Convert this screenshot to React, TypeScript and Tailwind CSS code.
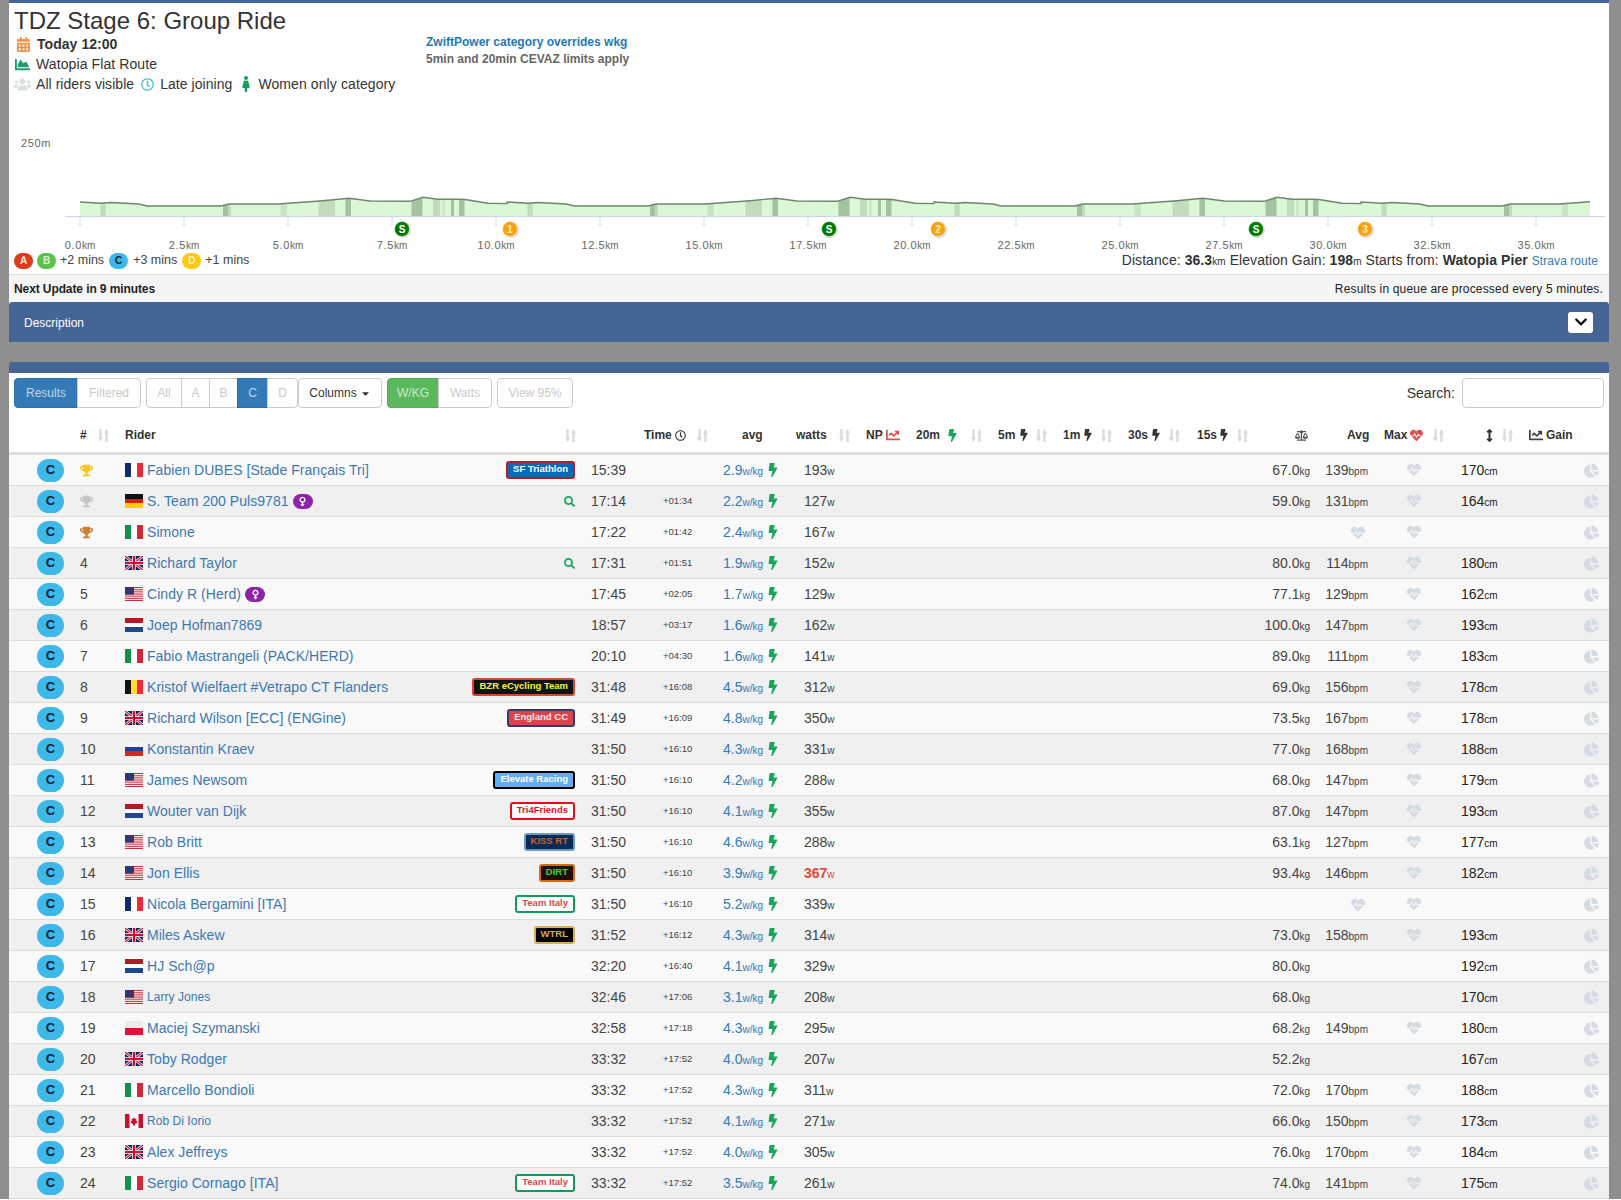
import {
  FaArrowsAltV,
  FaBalanceScale,
  FaBolt,
  FaCalendarAlt,
  FaCaretDown,
  FaChartArea,
  FaChartLine,
  FaChartPie,
  FaChevronDown,
  FaFemale,
  FaHeartbeat,
  FaRegClock,
  FaSearch,
  FaTrophy,
  FaUsers,
  FaVenus,
} from "react-icons/fa";

type Team = { name: string; cls: string };

const teams: Record<string, Team> = {
  sf: { name: "SF Triathlon", cls: "bg-[#0a6ab5] border-[#b0202e] text-white" },
  bzr: { name: "BZR eCycling Team", cls: "bg-[#111111] border-[#d9472b] text-[#f5f53a]" },
  eng: { name: "England CC", cls: "bg-[#d5464f] border-[#3a3a6a] text-[#f3e6e6]" },
  ele: { name: "Elevate Racing", cls: "bg-[#62aef0] border-[#000000] text-white" },
  tri: { name: "Tri4Friends", cls: "bg-white border-[#e0101c] text-[#e0101c]" },
  kiss: { name: "KISS RT", cls: "bg-[#0b2a55] border-[#6a9bbb] text-[#c8642a]" },
  dirt: { name: "DIRT", cls: "bg-[#1d0f05] border-[#cf6a1a] text-[#3fd23f]" },
  ita: { name: "Team Italy", cls: "bg-white border-[#109a5c] text-[#d9484f]" },
  wtrl: { name: "WTRL", cls: "bg-[#000000] border-[#d9b14c] text-[#d9b14c]" },
};

type Row = {
  flag: string;
  name: string;
  small?: boolean;
  team?: string;
  search?: boolean;
  venus?: boolean;
  time: string;
  delta?: string;
  wkg: string;
  watts: string;
  hot?: boolean;
  kg?: string;
  bpm?: string;
  height?: string;
  hearts?: "both" | "max" | "none";
};

const rows: Row[] = [
  { flag: "fr", name: "Fabien DUBES [Stade Français Tri]", team: "sf", time: "15:39", wkg: "2.9", watts: "193", kg: "67.0", bpm: "139", height: "170", hearts: "max" },
  { flag: "de", name: "S. Team 200 Puls9781", venus: true, search: true, time: "17:14", delta: "+01:34", wkg: "2.2", watts: "127", kg: "59.0", bpm: "131", height: "164", hearts: "max" },
  { flag: "it", name: "Simone", time: "17:22", delta: "+01:42", wkg: "2.4", watts: "167", hearts: "both" },
  { flag: "gb", name: "Richard Taylor", search: true, time: "17:31", delta: "+01:51", wkg: "1.9", watts: "152", kg: "80.0", bpm: "114", height: "180", hearts: "max" },
  { flag: "us", name: "Cindy R (Herd)", venus: true, time: "17:45", delta: "+02:05", wkg: "1.7", watts: "129", kg: "77.1", bpm: "129", height: "162", hearts: "max" },
  { flag: "nl", name: "Joep Hofman7869", time: "18:57", delta: "+03:17", wkg: "1.6", watts: "162", kg: "100.0", bpm: "147", height: "193", hearts: "max" },
  { flag: "it", name: "Fabio Mastrangeli (PACK/HERD)", time: "20:10", delta: "+04:30", wkg: "1.6", watts: "141", kg: "89.0", bpm: "111", height: "183", hearts: "max" },
  { flag: "be", name: "Kristof Wielfaert #Vetrapo CT Flanders", team: "bzr", time: "31:48", delta: "+16:08", wkg: "4.5", watts: "312", kg: "69.0", bpm: "156", height: "178", hearts: "max" },
  { flag: "gb", name: "Richard Wilson [ECC] (ENGine)", team: "eng", time: "31:49", delta: "+16:09", wkg: "4.8", watts: "350", kg: "73.5", bpm: "167", height: "178", hearts: "max" },
  { flag: "ru", name: "Konstantin Kraev", time: "31:50", delta: "+16:10", wkg: "4.3", watts: "331", kg: "77.0", bpm: "168", height: "188", hearts: "max" },
  { flag: "us", name: "James Newsom", team: "ele", time: "31:50", delta: "+16:10", wkg: "4.2", watts: "288", kg: "68.0", bpm: "147", height: "179", hearts: "max" },
  { flag: "nl", name: "Wouter van Dijk", team: "tri", time: "31:50", delta: "+16:10", wkg: "4.1", watts: "355", kg: "87.0", bpm: "147", height: "193", hearts: "max" },
  { flag: "us", name: "Rob Britt", team: "kiss", time: "31:50", delta: "+16:10", wkg: "4.6", watts: "288", kg: "63.1", bpm: "127", height: "177", hearts: "max" },
  { flag: "us", name: "Jon Ellis", team: "dirt", time: "31:50", delta: "+16:10", wkg: "3.9", watts: "367", hot: true, kg: "93.4", bpm: "146", height: "182", hearts: "max" },
  { flag: "fr", name: "Nicola Bergamini [ITA]", team: "ita", time: "31:50", delta: "+16:10", wkg: "5.2", watts: "339", hearts: "both" },
  { flag: "gb", name: "Miles Askew", team: "wtrl", time: "31:52", delta: "+16:12", wkg: "4.3", watts: "314", kg: "73.0", bpm: "158", height: "193", hearts: "max" },
  { flag: "nl", name: "HJ Sch@p", time: "32:20", delta: "+16:40", wkg: "4.1", watts: "329", kg: "80.0", height: "192", hearts: "none" },
  { flag: "us", name: "Larry Jones", small: true, time: "32:46", delta: "+17:06", wkg: "3.1", watts: "208", kg: "68.0", height: "170", hearts: "none" },
  { flag: "pl", name: "Maciej Szymanski", time: "32:58", delta: "+17:18", wkg: "4.3", watts: "295", kg: "68.2", bpm: "149", height: "180", hearts: "max" },
  { flag: "gb", name: "Toby Rodger", time: "33:32", delta: "+17:52", wkg: "4.0", watts: "207", kg: "52.2", height: "167", hearts: "none" },
  { flag: "it", name: "Marcello Bondioli", time: "33:32", delta: "+17:52", wkg: "4.3", watts: "311", kg: "72.0", bpm: "170", height: "188", hearts: "max" },
  { flag: "ca", name: "Rob Di Iorio", small: true, time: "33:32", delta: "+17:52", wkg: "4.1", watts: "271", kg: "66.0", bpm: "150", height: "173", hearts: "max" },
  { flag: "gb", name: "Alex Jeffreys", time: "33:32", delta: "+17:52", wkg: "4.0", watts: "305", kg: "76.0", bpm: "170", height: "184", hearts: "max" },
  { flag: "it", name: "Sergio Cornago [ITA]", team: "ita", time: "33:32", delta: "+17:52", wkg: "3.5", watts: "261", kg: "74.0", bpm: "141", height: "175", hearts: "max" },
];

const Flag = ({ code }: { code: string }) => {
  const body = () => {
    switch (code) {
      case "fr":
        return (
          <>
            <rect width="6" height="14" fill="#0f2a75" />
            <rect x="6" width="6" height="14" fill="#fff" />
            <rect x="12" width="6" height="14" fill="#ee2a39" />
          </>
        );
      case "it":
        return (
          <>
            <rect width="6" height="14" fill="#0f9150" />
            <rect x="6" width="6" height="14" fill="#fff" />
            <rect x="12" width="6" height="14" fill="#cf2b37" />
          </>
        );
      case "de":
        return (
          <>
            <rect width="18" height="5" fill="#111" />
            <rect y="5" width="18" height="4" fill="#dd1c1c" />
            <rect y="9" width="18" height="5" fill="#ffce00" />
          </>
        );
      case "be":
        return (
          <>
            <rect width="6" height="14" fill="#111" />
            <rect x="6" width="6" height="14" fill="#fde02f" />
            <rect x="12" width="6" height="14" fill="#ee2a39" />
          </>
        );
      case "nl":
        return (
          <>
            <rect width="18" height="5" fill="#ae1c28" />
            <rect y="5" width="18" height="4" fill="#fff" />
            <rect y="9" width="18" height="5" fill="#21468b" />
          </>
        );
      case "ru":
        return (
          <>
            <rect width="18" height="5" fill="#f4f4f4" />
            <rect y="5" width="18" height="4" fill="#1c3fa0" />
            <rect y="9" width="18" height="5" fill="#d52b1e" />
          </>
        );
      case "pl":
        return (
          <>
            <rect width="18" height="7" fill="#ececec" />
            <rect y="7" width="18" height="7" fill="#dc143c" />
          </>
        );
      case "ca":
        return (
          <>
            <rect width="18" height="14" fill="#fff" />
            <rect width="4.5" height="14" fill="#c8102e" />
            <rect x="13.5" width="4.5" height="14" fill="#c8102e" />
            <path d="M9 3l1 2 1.5-.6-.5 2.6 1.5-.4-.5 1.4.8.5L10 10l.2 1.4H7.8L8 10 5.2 8.5l.8-.5-.5-1.4 1.5.4-.5-2.6L8 5z" fill="#c8102e" />
          </>
        );
      case "us":
        return (
          <>
            <rect width="18" height="14" fill="#fff" />
            <rect width="18" height="1.1" fill="#c8313e" />
            <rect y="2.2" width="18" height="1.1" fill="#c8313e" />
            <rect y="4.3" width="18" height="1.1" fill="#c8313e" />
            <rect y="6.5" width="18" height="1.1" fill="#c8313e" />
            <rect y="8.6" width="18" height="1.1" fill="#c8313e" />
            <rect y="10.8" width="18" height="1.1" fill="#c8313e" />
            <rect y="12.9" width="18" height="1.1" fill="#c8313e" />
            <rect width="9" height="7.6" fill="#33366e" />
          </>
        );
      default:
        return (
          <>
            <rect width="18" height="14" fill="#14225f" />
            <path d="M0 0l18 14M18 0L0 14" stroke="#fff" strokeWidth="2.6" />
            <path d="M0 0l18 14M18 0L0 14" stroke="#c8102e" strokeWidth="1.2" />
            <path d="M9 0v14M0 7h18" stroke="#fff" strokeWidth="3.6" />
            <path d="M9 0v14M0 7h18" stroke="#c8102e" strokeWidth="2.2" />
          </>
        );
    }
  };
  return (
    <svg width="18" height="14" viewBox="0 0 18 14" className="shrink-0">
      {body()}
    </svg>
  );
};

// two fat arrows, down on the left and up on the right
const SortIcon = () => (
  <svg width="11" height="13" viewBox="0 0 11 13" className="block shrink-0" fill="#dadada">
    <path d="M1.3 0h2.4v8.5H5L2.5 13 0 8.5h1.3z" />
    <path d="M7.3 13h2.4V4.5H11L8.5 0 6 4.5h1.3z" />
  </svg>
);

// elevation profile: one lap, repeated until the route ends
const lapLine: [number, number][] = [
  [0, 202], [21, 203.3], [31, 202.5], [59, 204], [67, 206], [141, 206], [149, 204], [198, 204],
  [240, 201], [269, 198.3], [290, 201], [330, 201.3], [343, 197.3], [358, 199.3], [379, 199.3],
  [385, 199.5], [408, 203.3], [427, 203.6],
];
const lapBands: [number, number, string][] = [
  [20.5, 5.2, "#c0dcb8"], [143, 5, "#a3c29f"], [148, 3, "#c0dcb8"], [200.6, 6.4, "#c9e4c2"],
  [238.5, 16.5, "#c3dcbc"], [265.4, 5.6, "#a3c29f"], [331.5, 11, "#a3c29f"], [353, 7, "#c0dcb8"],
  [362, 3, "#cfe9c8"], [371, 3, "#a3c29f"], [379, 5.5, "#a3c29f"],
];
const laps = [80, 507, 934, 1361];
const profile = laps
  .flatMap((o) => lapLine.map(([x, y]) => [x + o, y] as [number, number]))
  .map(([x, y], i) => `${i === 0 ? "M" : "L"}${x} ${y}`)
  .join(" ");
const kms = Array.from({ length: 15 }, (_, i) => i);
const markers: [number, string, string][] = [
  [402, "S", "#007a00"],
  [510, "1", "#f5a313"],
  [829, "S", "#007a00"],
  [938, "2", "#f5a313"],
  [1256, "S", "#007a00"],
  [1365, "3", "#f5a313"],
];

const ElevationChart = () => (
  <svg viewBox="9 100 1600 152" className="block w-[1600px] h-[152px]" fontFamily="Liberation Sans, Arial, sans-serif">
    <defs>
      <clipPath id="route">
        <rect x="80" y="190" width="1510" height="26" />
      </clipPath>
    </defs>
    <text x="21" y="147" fontSize="11" fill="#666" letterSpacing="0.6">
      250m
    </text>
    <g clipPath="url(#route)">
      <path d={`${profile} V216 H80 Z`} fill="#dcf7d6" />
      {laps.map((o) =>
        lapBands.map(([x, w, c]) => <rect key={`${o}-${x}`} x={x + o} y="190" width={w} height="26" fill={c} />)
      )}
      <path d={`${profile} V190 H80 Z`} fill="#fff" />
      <path d={profile} fill="none" stroke="#6f8570" strokeWidth="1.4" />
    </g>
    <path d="M65 216.5H1605" stroke="#ccd6eb" />
    {kms.map((i) => (
      <g key={i}>
        <path d={`M${80 + i * 104} 216V226`} stroke="#ccd6eb" />
        <text x={80 + i * 104} y="249" textAnchor="middle" fontSize="11" fill="#666" letterSpacing="0.6">
          {(i * 2.5).toFixed(1)}
          <tspan fontSize="10" letterSpacing="0">
            km
          </tspan>
        </text>
      </g>
    ))}
    {markers.map(([x, t, c]) => (
      <g key={x}>
        <circle cx={x + 1} cy="230" r="8" fill="#000" opacity="0.15" />
        <circle cx={x} cy="229" r="7.5" fill={c} stroke="#fff" strokeWidth="0.5" />
        <text x={x} y="232.5" textAnchor="middle" fontSize="10" fontWeight="bold" fill={c === "#007a00" ? "#fff" : "#ffe9b8"}>
          {t}
        </text>
      </g>
    ))}
  </svg>
);

const CatDot = ({ label, cls }: { label: string; cls: string }) => (
  <span className={`inline-flex items-center justify-center w-[19px] h-[16px] rounded-full text-[10px] font-bold ${cls}`}>{label}</span>
);

const Bar = ({ children, on, faded, w }: { children: React.ReactNode; on?: string; faded?: boolean; w: string }) => (
  <span
    className={`flex items-center justify-center h-[30px] text-[12px] border ${w} ${
      on ? on : faded ? "bg-white border-[#ccc] text-[#c9c9c9]" : "bg-white border-[#ccc] text-[#333]"
    }`}
  >
    {children}
  </span>
);

const Head = ({ cls, children }: { cls?: string; children?: React.ReactNode }) => (
  <th className={`h-[47px] pt-[10px] border-b-[3px] border-[#ddd] font-bold text-[12px] text-[#333] align-middle ${cls ?? ""}`}>
    <div className="flex items-center whitespace-nowrap">{children}</div>
  </th>
);

export default function App() {
  return (
    <div className="bg-[#8f8f8f] pl-[9px] pr-[12px] font-['Liberation_Sans',Arial,sans-serif] text-[#333]">
      <section className="bg-white border-t-[3px] border-[#456596]">
        <div className="flex h-[97px]">
          <div className="w-[417px] pl-[5px]">
            <h1 className="text-[24px] leading-[27px] pt-[4px] text-[#333]">TDZ Stage 6: Group Ride</h1>
            <div className="flex items-center h-[20px] text-[14px]">
              <FaCalendarAlt className="ml-[2px] text-[#f0944d] text-[15px]" />
              <b className="ml-[6px] tracking-[0.05px]">Today 12:00</b>
            </div>
            <div className="flex items-center h-[20px] text-[14px]">
              <FaChartArea className="ml-[1px] text-[#1f9e6a] text-[15px]" />
              <span className="ml-[6px] tracking-[0.1px]">Watopia Flat Route</span>
            </div>
            <div className="flex items-center h-[20px] text-[14px]">
              <FaUsers className="text-[#dcdfe6] text-[17px]" />
              <span className="ml-[5px] tracking-[0.05px]">All riders visible</span>
              <FaRegClock className="ml-[7px] text-[#3fbfcf] text-[13px]" />
              <span className="ml-[6px] tracking-[0.05px]">Late joining</span>
              <FaFemale className="ml-[6px] text-[#13a05c] text-[16px]" />
              <span className="ml-[4px] tracking-[0.1px]">Women only category</span>
            </div>
          </div>
          <div className="pt-[31px] text-[12px] font-bold leading-[17px]">
            <div className="text-[#1f78b4]">ZwiftPower category overrides wkg</div>
            <div className="text-[#666]">5min and 20min CEVAZ limits apply</div>
          </div>
        </div>
        <ElevationChart />
        <div className="flex justify-between items-center h-[22px] pb-[5px] pl-[5px] pr-[11px] text-[12.5px] text-[#444]">
          <div className="flex items-center">
            <CatDot label="A" cls="bg-[#dd3c1c] text-[#fbe6e0]" />
            <CatDot label="B" cls="ml-[4px] bg-[#5cc24f] text-[#d8f3d0]" />
            <span className="ml-[4px]">+2 mins</span>
            <CatDot label="C" cls="ml-[5px] bg-[#3db8e8] text-[#0b2030]" />
            <span className="ml-[5px]">+3 mins</span>
            <CatDot label="D" cls="ml-[5px] bg-[#fbcb14] text-[#fff3bf]" />
            <span className="ml-[4px]">+1 mins</span>
          </div>
          <div className="text-[14px] text-[#333] tracking-[0.07px]">
            Distance: <b>36.3</b>
            <span className="text-[10px]">km</span> Elevation Gain: <b>198</b>
            <span className="text-[10px]">m</span> Starts from: <b>Watopia Pier</b>{" "}
            <span className="text-[12px] text-[#337ab7]">Strava route</span>
          </div>
        </div>
        <div className="flex justify-between items-center h-[28px] bg-[#f5f5f5] border-t border-[#ddd] pl-[5px] pr-[6px] text-[12px] text-[#222]">
          <b className="tracking-[-0.1px]">Next Update in 9 minutes</b>
          <span className="tracking-[0.17px]">Results in queue are processed every 5 minutes.</span>
        </div>
        <div className="flex justify-between items-center h-[40px] bg-[#456596] rounded-t-[3px] pl-[15px] pr-[16px]">
          <span className="text-[12px] text-white mt-[2px]">Description</span>
          <span className="flex items-center justify-center w-[25px] h-[21px] bg-white rounded-[3px] text-black text-[14px]">
            <FaChevronDown />
          </span>
        </div>
      </section>

      <section className="mt-[20px] bg-white border-t-[11px] border-[#456596] rounded-t-[3px]">
        <div className="flex items-center pt-[5px] pl-[5px] pr-[5px]">
          <Bar w="w-[64px] rounded-l-[4px]" on="bg-[#337ab7] border-[#2e6da4] text-[#c3d6e8]">Results</Bar>
          <Bar w="w-[64px] rounded-r-[4px] -ml-px" faded>Filtered</Bar>
          <Bar w="w-[36px] rounded-l-[4px] ml-[5px]" faded>All</Bar>
          <Bar w="w-[29px] -ml-px" faded>A</Bar>
          <Bar w="w-[29px] -ml-px" faded>B</Bar>
          <Bar w="w-[31px] -ml-px" on="bg-[#337ab7] border-[#2e6da4] text-[#c3d6e8]">C</Bar>
          <Bar w="w-[31px] rounded-r-[4px] -ml-px" faded>D</Bar>
          <Bar w="w-[84px] rounded-[4px]">
            Columns <FaCaretDown className="ml-[3px] text-[11px]" />
          </Bar>
          <Bar w="w-[52px] rounded-l-[4px] ml-[5px]" on="bg-[#5cb85c] border-[#4cae4c] text-[#cbe8cb]">W/KG</Bar>
          <Bar w="w-[54px] rounded-r-[4px] -ml-px" faded>Watts</Bar>
          <Bar w="w-[76px] rounded-[4px] ml-[5px]" faded>View 95%</Bar>
          <span className="ml-auto text-[14px] text-[#333]">Search:</span>
          <span className="ml-[7px] w-[142px] h-[30px] border border-[#ccc] rounded-[4px] bg-white" />
        </div>

        <table className="w-[1600px] table-fixed border-separate border-spacing-0">
          <colgroup>
            <col className="w-[63px]" />
            <col className="w-[48px]" />
            <col className="w-[462px]" />
            <col className="w-[133px]" />
            <col className="w-[75px]" />
            <col className="w-[70px]" />
            <col className="w-[46px]" />
            <col className="w-[84px]" />
            <col className="w-[65px]" />
            <col className="w-[65px]" />
            <col className="w-[67px]" />
            <col className="w-[68px]" />
            <col className="w-[65px]" />
            <col className="w-[57px]" />
            <col className="w-[68px]" />
            <col className="w-[75px]" />
            <col className="w-[89px]" />
          </colgroup>
          <thead>
            <tr>
              <Head />
              <Head cls="pl-[8px]">
                #<span className="ml-[11px]"><SortIcon /></span>
              </Head>
              <Head cls="pl-[5px]">
                Rider<span className="ml-[409px]"><SortIcon /></span>
              </Head>
              <Head cls="pl-[62px]">
                Time
                <FaRegClock className="ml-[3px] text-[11px] shrink-0" />
                <span className="ml-[11px]"><SortIcon /></span>
              </Head>
              <Head cls="pl-[27px]">avg</Head>
              <Head cls="pl-[6px]">
                watts<span className="ml-[12px]"><SortIcon /></span>
              </Head>
              <Head cls="pl-[6px]">
                NP<FaChartLine className="ml-[3px] text-[14px] text-[#d9534f] shrink-0" />
              </Head>
              <Head cls="pl-[10px]">
                20m<FaBolt className="ml-[6px] text-[13px] text-[#17a65b] shrink-0" />
                <span className="ml-[12px]"><SortIcon /></span>
              </Head>
              <Head cls="pl-[8px]">
                5m<FaBolt className="ml-[3px] text-[12px] shrink-0" />
                <span className="ml-[6px]"><SortIcon /></span>
              </Head>
              <Head cls="pl-[8px]">
                1m<FaBolt className="ml-[2px] text-[12px] shrink-0" />
                <span className="ml-[7px]"><SortIcon /></span>
              </Head>
              <Head cls="pl-[8px]">
                30s<FaBolt className="ml-[2px] text-[12px] shrink-0" />
                <span className="ml-[7px]"><SortIcon /></span>
              </Head>
              <Head cls="pl-[10px]">
                15s<FaBolt className="ml-[1px] text-[12px] shrink-0" />
                <span className="ml-[7px]"><SortIcon /></span>
              </Head>
              <Head cls="pl-[40px]">
                <FaBalanceScale className="text-[13px] text-[#555] shrink-0" />
              </Head>
              <Head cls="pl-[27px]">Avg</Head>
              <Head cls="pl-[7px]">
                Max<FaHeartbeat className="ml-[3px] text-[13px] text-[#d9534f] shrink-0" />
                <span className="ml-[10px]"><SortIcon /></span>
              </Head>
              <Head cls="pl-[38px]">
                <FaArrowsAltV className="text-[13px] shrink-0" />
                <span className="ml-[6px]"><SortIcon /></span>
              </Head>
              <Head cls="pl-[9px]">
                <FaChartLine className="text-[14px] text-[#444] shrink-0" />
                <span className="ml-[3px]">Gain</span>
              </Head>
            </tr>
          </thead>
          <tbody>
            {rows.map((r, i) => (
              <tr key={i} className={i % 2 === 0 ? "bg-[#f9f9f9]" : "bg-[#f0f0f0]"}>
                <td className="h-[31px] border-b border-[#ddd] p-0">
                  <span className="ml-[28px] flex items-center justify-center w-[27px] h-[23px] rounded-full bg-[#3db8e8] text-[#0b2030] text-[13px] font-bold">
                    C
                  </span>
                </td>
                <td className="border-b border-[#ddd] p-0 pl-[8px] text-[14px] text-[#444]">
                  {i === 0 ? (
                    <FaTrophy className="text-[13px] text-[#f7c51e]" />
                  ) : i === 1 ? (
                    <FaTrophy className="text-[13px] text-[#c4c4c4]" />
                  ) : i === 2 ? (
                    <FaTrophy className="text-[13px] text-[#cd7f32]" />
                  ) : (
                    i + 1
                  )}
                </td>
                <td className="border-b border-[#ddd] p-0 pl-[5px] pr-[7px]">
                  <div className="flex items-center">
                    <Flag code={r.flag} />
                    <span className={`ml-[4px] text-[#3d78b2] tracking-[0.05px] ${r.small ? "text-[12px]" : "text-[14px]"}`}>{r.name}</span>
                    {r.venus && (
                      <span className="ml-[4px] flex items-center justify-center w-[20px] h-[15px] rounded-full bg-[#8e24aa] text-white text-[11px]">
                        <FaVenus />
                      </span>
                    )}
                    {r.team && (
                      <span className={`ml-auto border-2 rounded-[3px] px-[5px] h-[18px] leading-[12px] text-[9.5px] font-bold ${teams[r.team].cls}`}>
                        {teams[r.team].name}
                      </span>
                    )}
                    {r.search && <FaSearch className="ml-auto text-[11px] text-[#17a65b]" />}
                  </div>
                </td>
                <td className="border-b border-[#ddd] p-0 pl-[9px]">
                  <div className="flex items-center">
                    <span className="w-[72px] text-[14px] text-[#444]">{r.time}</span>
                    <span className="text-[9.5px] text-[#444]">{r.delta}</span>
                  </div>
                </td>
                <td className="border-b border-[#ddd] p-0 pl-[8px]">
                  <div className="flex items-center text-[#337ab7]">
                    <span className="text-[14px]">{r.wkg}</span>
                    <span className="text-[10px] mt-[2px]">w/kg</span>
                    <FaBolt className="ml-[3px] text-[14px] text-[#17a65b]" />
                  </div>
                </td>
                <td className={`border-b border-[#ddd] p-0 pl-[14px] text-[14px] ${r.hot ? "font-bold text-[#e04a3a]" : "text-[#444]"}`}>
                  {r.watts}
                  <span className="text-[10px] font-normal">w</span>
                </td>
                <td className="border-b border-[#ddd]" />
                <td className="border-b border-[#ddd]" />
                <td className="border-b border-[#ddd]" />
                <td className="border-b border-[#ddd]" />
                <td className="border-b border-[#ddd]" />
                <td className="border-b border-[#ddd]" />
                <td className="border-b border-[#ddd] p-0 pr-[10px] text-right text-[14px] text-[#444]">
                  {r.kg}
                  {r.kg && <span className="text-[10px]">kg</span>}
                </td>
                <td className="border-b border-[#ddd] p-0 pr-[9px] text-right text-[14px] text-[#444]">
                  {r.bpm && (
                    <>
                      {r.bpm}
                      <span className="text-[10px]">bpm</span>
                    </>
                  )}
                  {r.hearts === "both" && <FaHeartbeat className="inline-block mr-[3px] text-[14px] text-[#d5dbe3]" />}
                </td>
                <td className="border-b border-[#ddd] p-0 pl-[30px]">
                  {r.hearts !== "none" && <FaHeartbeat className="text-[14px] text-[#d5dbe3]" />}
                </td>
                <td className="border-b border-[#ddd] p-0 pl-[16px] text-[14px] text-[#222]">
                  {r.height}
                  {r.height && <span className="text-[10px]">cm</span>}
                </td>
                <td className="border-b border-[#ddd] p-0 pr-[10px]">
                  <FaChartPie className="ml-auto text-[15px] text-[#d5dbe3]" />
                </td>
              </tr>
            ))}
          </tbody>
        </table>
      </section>
    </div>
  );
}
